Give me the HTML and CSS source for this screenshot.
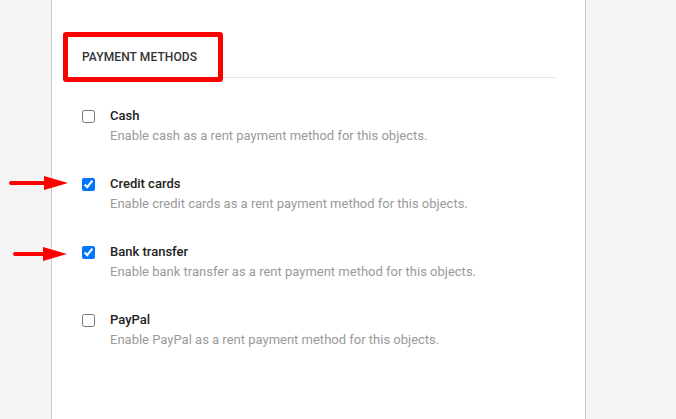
FILE: index.html
```html
<!DOCTYPE html>
<html>
<head>
<meta charset="utf-8">
<link rel="stylesheet" href="styles.css">
</head>
<body>
<div class="page">
  <div class="panel">
    <div class="section-head">PAYMENT METHODS</div>
    <div class="list">
      <label class="item">
        <input type="checkbox" class="cb">
        <span class="text"><span class="title">Cash</span><span class="desc">Enable cash as a rent payment method for this objects.</span></span>
      </label>
      <label class="item">
        <input type="checkbox" class="cb" checked>
        <span class="text"><span class="title">Credit cards</span><span class="desc">Enable credit cards as a rent payment method for this objects.</span></span>
      </label>
      <label class="item">
        <input type="checkbox" class="cb" checked>
        <span class="text"><span class="title">Bank transfer</span><span class="desc">Enable bank transfer as a rent payment method for this objects.</span></span>
      </label>
      <label class="item">
        <input type="checkbox" class="cb">
        <span class="text"><span class="title">PayPal</span><span class="desc">Enable PayPal as a rent payment method for this objects.</span></span>
      </label>
    </div>
  </div>
  <div class="highlight"></div>
  <svg class="arrow arrow-1" width="62" height="16" viewBox="0 0 62 16"><line x1="2" y1="8" x2="38" y2="8" stroke="#ff0000" stroke-width="4" stroke-linecap="round"/><polygon points="35,1 59,8 35,15" fill="#ff0000"/></svg>
  <svg class="arrow arrow-2" width="62" height="16" viewBox="0 0 62 16"><line x1="2" y1="8" x2="36" y2="8" stroke="#ff0000" stroke-width="4" stroke-linecap="round"/><polygon points="30,1 54,8 30,15" fill="#ff0000"/></svg>
</div>
</body>
</html>
```
FILE: styles.css
```css
html, body {
  margin: 0;
  padding: 0;
  height: 100%;
  background: #f4f4f4;
  font-family: Roboto, "Liberation Sans", Arial, sans-serif;
}
.page {
  position: relative;
  height: 419px;
  overflow: hidden;
}
.panel {
  margin-left: 51px;
  width: 535px;
  height: 100%;
  box-sizing: border-box;
  background: #ffffff;
  border-left: 1px solid #c6c6c6;
  border-right: 1px solid #c6c6c6;
  padding: 49px 30px 0 30px;
}
.section-head {
  font-size: 12px;
  line-height: 16px;
  font-weight: 500;
  color: #333333;
  padding-bottom: 12px;
  border-bottom: 1px solid #e4e4e4;
  letter-spacing: 0.1px;
}
.list {
  display: flex;
  flex-direction: column;
  gap: 28px;
  margin-top: 28px;
}
.item {
  display: flex;
  gap: 15px;
  align-items: flex-start;
}
.cb {
  width: 13px;
  height: 13px;
  margin: 4px 0 0 0;
  flex: none;
  accent-color: #0075ff;
}
.text {
  display: flex;
  flex-direction: column;
  font-size: 13px;
  line-height: 20px;
}
.title {
  font-weight: 500;
  color: #222222;
}
.desc {
  color: #9a9a9a;
}
.highlight {
  position: absolute;
  left: 63px;
  top: 32px;
  width: 160px;
  height: 50px;
  box-sizing: border-box;
  border: 5px solid #ff0000;
  border-radius: 3px;
}
.arrow {
  position: absolute;
}
.arrow-1 {
  left: 9px;
  top: 175px;
}
.arrow-2 {
  left: 13px;
  top: 246px;
}
```
